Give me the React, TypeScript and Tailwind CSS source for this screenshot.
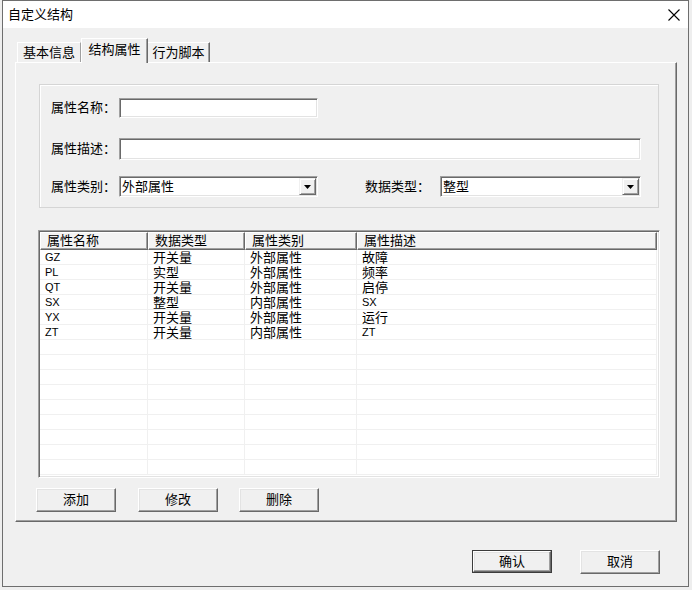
import React from 'react';

const font = { fontFamily: '"Liberation Sans", "Noto Sans CJK SC", sans-serif' };

const rows = [
  ['GZ', '开关量', '外部属性', '故障'],
  ['PL', '实型', '外部属性', '频率'],
  ['QT', '开关量', '外部属性', '启停'],
  ['SX', '整型', '内部属性', 'SX'],
  ['YX', '开关量', '外部属性', '运行'],
  ['ZT', '开关量', '内部属性', 'ZT'],
];

const cols = 'grid grid-cols-[108px_97px_112px_1fr]';

// sunken edit field
const sunken =
  'bg-white border-t border-l border-b border-r border-t-[#a0a0a0] border-l-[#a0a0a0] border-b-white border-r-white shadow-[inset_1px_1px_0_#696969,inset_-1px_-1px_0_#e3e3e3]';

function Combo({ value, width }: { value: string; width: string }) {
  return (
    <div className={`${sunken} ${width} h-[21px] flex items-center justify-between pl-[2px] pr-[1px]`}>
      <span className="text-[13px] leading-[15px] text-black">{value}</span>
      <div className="w-[17px] h-[17px] bg-[#f0f0f0] border border-t-[#f0f0f0] border-l-[#f0f0f0] border-b-[#696969] border-r-[#696969] shadow-[inset_1px_1px_0_#ffffff,inset_-1px_-1px_0_#a0a0a0] flex items-center justify-center">
        <svg width="7" height="4" viewBox="0 0 7 4">
          <path d="M0 0h7L3.5 4z" fill="#000" />
        </svg>
      </div>
    </div>
  );
}

function Btn({ label, def }: { label: string; def?: boolean }) {
  return (
    <button
      className={`w-[80px] ${def ? 'h-[23px] border border-[#3c3c3c]' : 'h-[24px]'} bg-[#f0f0f0] flex items-center justify-center p-0`}
    >
      <div className="w-full h-full flex items-center justify-center border border-t-white border-l-white border-b-[#696969] border-r-[#696969] shadow-[inset_-1px_-1px_0_#a0a0a0,inset_1px_1px_0_#e3e3e3] text-[13px] text-black">
        {label}
      </div>
    </button>
  );
}

export default function App() {
  return (
    <div className="w-[692px] h-[590px] bg-[#eeeeee] overflow-hidden" style={font}>
      <div className="ml-[2px] w-[687px] h-[587px] border border-[#6e6e6e] flex flex-col bg-[#f0f0f0]">
        {/* title bar */}
        <div className="h-[27px] bg-white flex items-center justify-between pl-[5px] pr-[8px]">
          <span className="text-[13px] text-black">自定义结构</span>
          <svg width="12" height="12" viewBox="0 0 12 12">
            <path d="M0.5 0.5L11.5 11.5M11.5 0.5L0.5 11.5" stroke="#000" strokeWidth="1.1" />
          </svg>
        </div>

        <div className="flex-1 pl-[12px] pr-[10px] pt-[10px]">
          {/* tabs */}
          <div className="flex items-end pl-[2px] h-[24px]">
            <div className="w-[64px] h-[20px] flex items-center justify-center border-t border-l border-white border-r border-r-[#a0a0a0] text-[13px] text-black">
              基本信息
            </div>
            <div className="relative z-10 w-[67px] h-[25px] -mb-px bg-[#f0f0f0] flex items-center justify-center border-t border-l border-white border-r border-r-[#696969] shadow-[inset_-1px_0_0_#a0a0a0] text-[13px] text-black pb-[3px]">
              结构属性
            </div>
            <div className="w-[62px] h-[20px] flex items-center justify-center border-t border-white border-r border-r-[#696969] shadow-[inset_-1px_0_0_#a0a0a0] text-[13px] text-black">
              行为脚本
            </div>
          </div>

          {/* tab page */}
          <div className="w-[662px] h-[460px] border-t border-l border-white border-r border-b border-r-[#696969] border-b-[#696969] shadow-[inset_-1px_-1px_0_#a0a0a0] pt-[21px]">
            {/* group box */}
            <div className="ml-[23px] w-[620px] h-[124px] border border-[#d5d5d5] shadow-[inset_1px_1px_0_#ffffff] pt-[13px] pl-[11px] flex flex-col">
              <div className="flex items-center h-[20px]">
                <span className="w-[68px] text-[13px] text-black">属性名称：</span>
                <div className={`${sunken} w-[199px] h-[20px]`} />
              </div>
              <div className="flex items-center h-[22px] mt-[20px]">
                <span className="w-[68px] text-[13px] text-black">属性描述：</span>
                <div className={`${sunken} w-[522px] h-[22px]`} />
              </div>
              <div className="flex items-center h-[21px] mt-[16px]">
                <span className="w-[68px] text-[13px] text-black">属性类别：</span>
                <Combo value="外部属性" width="w-[199px]" />
                <span className="ml-[47px] w-[75px] text-[13px] text-black">数据类型：</span>
                <Combo value="整型" width="w-[201px]" />
              </div>
            </div>

            {/* list view */}
            <div className="ml-[22px] mt-[22px] w-[622px] h-[248px] bg-white border-t border-l border-b border-r border-t-[#a0a0a0] border-l-[#a0a0a0] border-b-white border-r-white shadow-[inset_1px_1px_0_#696969,inset_-1px_-1px_0_#e3e3e3] p-[1px] pr-[2px] overflow-hidden">
              <div className={`${cols} h-[18px] bg-[#f3f3f3]`}>
                {['属性名称', '数据类型', '属性类别', '属性描述'].map((h) => (
                  <div
                    key={h}
                    className="h-[18px] pl-[6px] flex items-center text-[13px] text-black border-t border-l border-white border-r border-b border-r-[#696969] border-b-[#696969] shadow-[inset_-1px_-1px_0_#a0a0a0]"
                  >
                    {h}
                  </div>
                ))}
              </div>
              {Array.from({ length: 15 }).map((_, i) => {
                const r = rows[i] || ['', '', '', ''];
                return (
                  <div key={i} className={`${cols}`}>
                    {r.map((c, j) => (
                      <div
                        key={j}
                        className={`h-[15px] pl-[5px] leading-[15px] text-black border-b border-r border-[#f0f0f0] whitespace-nowrap ${
                          /^[A-Z]+$/.test(c) ? 'text-[11px]' : 'text-[13px]'
                        }`}
                      >
                        {c}
                      </div>
                    ))}
                  </div>
                );
              })}
            </div>

            {/* buttons */}
            <div className="flex mt-[10px] ml-[20px] gap-[22px]">
              <Btn label="添加" />
              <Btn label="修改" />
              <div className="-ml-px">
                <Btn label="删除" />
              </div>
            </div>
          </div>

          <div className="flex justify-end gap-[28px] mt-[28px] pr-[18px]">
            <Btn label="确认" def />
            <Btn label="取消" />
          </div>
        </div>
      </div>
    </div>
  );
}
